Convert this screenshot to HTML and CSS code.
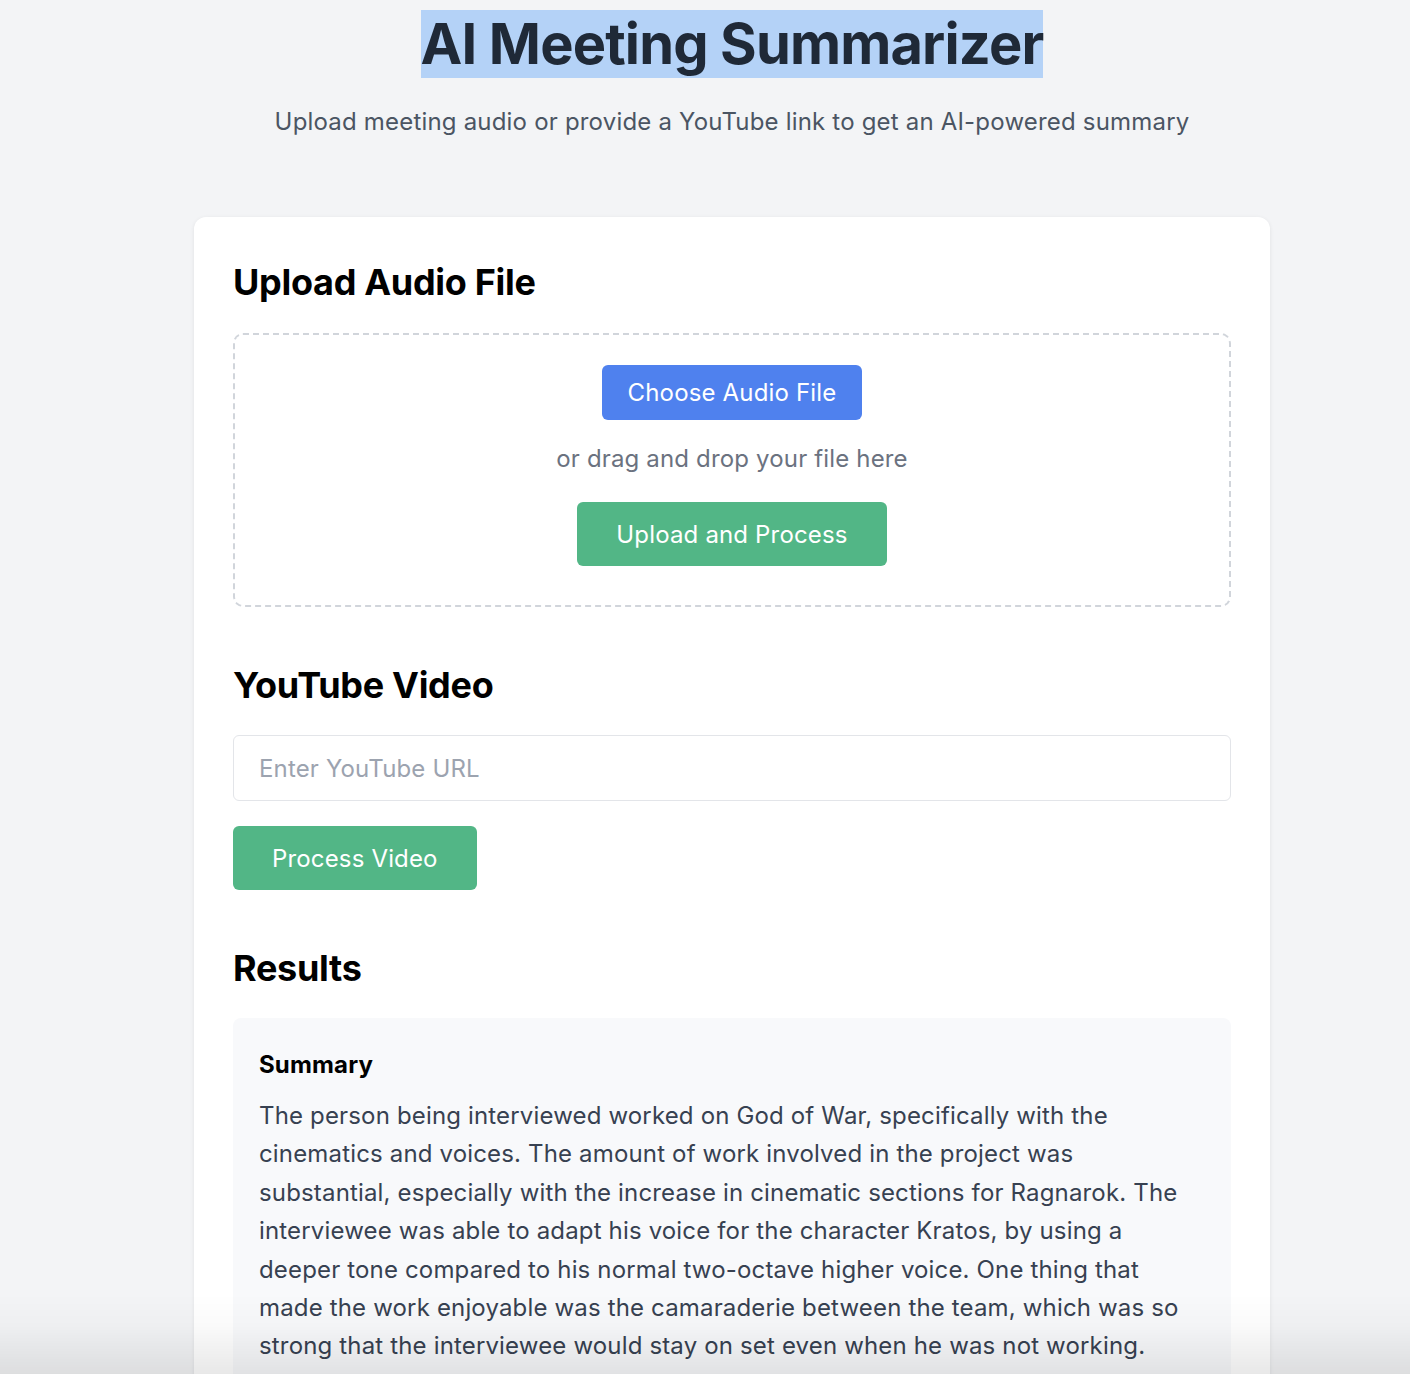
FILE: index.html
```html
<!DOCTYPE html>
<html lang="en">
<head>
<meta charset="utf-8">
<title>AI Meeting Summarizer</title>
<link rel="stylesheet" href="styles.css">
</head>
<body>
<div class="page">
  <header class="hero">
    <h1 class="title"><span class="selected">AI Meeting Summarizer</span></h1>
    <p class="subtitle">Upload meeting audio or provide a YouTube link to get an AI-powered summary</p>
  </header>

  <main class="card">
    <section class="section">
      <h2 class="section-title">Upload Audio File</h2>
      <div class="dropzone">
        <button class="btn btn-blue" type="button">Choose Audio File</button>
        <p class="drop-hint">or drag and drop your file here</p>
        <button class="btn btn-green btn-lg" type="button">Upload and Process</button>
      </div>
    </section>

    <section class="section section-yt">
      <h2 class="section-title">YouTube Video</h2>
      <input class="url-input" type="text" placeholder="Enter YouTube URL">
      <div class="yt-actions">
        <button class="btn btn-green btn-lg" type="button">Process Video</button>
      </div>
    </section>

    <section class="section section-results">
      <h2 class="section-title">Results</h2>
      <div class="result-box">
        <h3 class="result-title">Summary</h3>
        <p class="result-text">The person being interviewed worked on God of War, specifically with the cinematics and voices. The amount of work involved in the project was substantial, especially with the increase in cinematic sections for Ragnarok. The interviewee was able to adapt his voice for the character Kratos, by using a deeper tone compared to his normal two-octave higher voice. One thing that made the work enjoyable was the camaraderie between the team, which was so strong that the interviewee would stay on set even when he was not working.</p>
      </div>
    </section>
  </main>
</div>
<div class="bottom-fade"></div>
</body>
</html>
```

FILE: styles.css
```css
* { box-sizing: border-box; }

html, body {
  margin: 0;
  padding: 0;
  background: #f3f4f6;
}

body {
  font-family: Inter, "Noto Sans", "Liberation Sans", sans-serif;
  color: #1f2937;
  letter-spacing: 0.16px;
  height: 1374px;
  overflow: hidden;
}

.page {
  padding-left: 54px;
  display: flex;
  flex-direction: column;
  align-items: center;
}

.hero {
  text-align: center;
  padding-top: 10px;
}

.title {
  margin: 0;
  font-size: 56px;
  font-weight: 700;
  line-height: normal;
  color: #1f2937;
  letter-spacing: -0.85px;
}

.selected {
  background: #b4d2f7;
}

.subtitle {
  margin: 26px 0 0;
  font-size: 24px;
  line-height: 36px;
  color: #4b5563;
  letter-spacing: 0.19px;
}

.card {
  margin-top: 77px;
  width: 1076px;
  background: #ffffff;
  border-radius: 12px;
  box-shadow: 0 1px 4px rgba(0, 0, 0, 0.08);
  padding: 44px 39px 40px;
}

.section-title {
  margin: 0 0 29px;
  font-size: 36px;
  line-height: 43px;
  font-weight: 700;
  color: #000000;
  letter-spacing: -0.3px;
}

.dropzone {
  border: 2px dashed #d1d5db;
  border-radius: 10px;
  padding: 30px 20px 39px;
  display: flex;
  flex-direction: column;
  align-items: center;
}

.btn {
  border: none;
  border-radius: 6px;
  color: #ffffff;
  font-family: inherit;
  font-size: 24px;
  letter-spacing: 0.16px;
  cursor: pointer;
}

.btn-blue {
  background: #4f81ee;
  height: 55px;
  padding: 0 26px;
}

.btn-green {
  background: #52b686;
}

.btn-lg {
  height: 64px;
  padding: 0 39px;
}

.drop-hint {
  margin: 24px 0 28px;
  font-size: 24px;
  line-height: 30px;
  color: #6b7280;
}

.section-yt {
  margin-top: 57px;
}

.section-yt .section-title {
  margin-bottom: 28px;
}

.url-input {
  display: block;
  width: 100%;
  height: 66px;
  border: 1px solid #e3e5e9;
  border-radius: 6px;
  padding: 0 25px;
  font-family: inherit;
  font-size: 24px;
  letter-spacing: 0.16px;
  color: #1f2937;
  background: #ffffff;
  outline: none;
}

.url-input::placeholder {
  color: #9ca3af;
}

.yt-actions {
  margin-top: 25px;
}

.section-results {
  margin-top: 57px;
}

.section-results .section-title {
  margin-bottom: 28px;
}

.result-box {
  background: #f8f9fb;
  border-radius: 8px;
  padding: 32px 26px 30px;
}

.result-title {
  margin: 0 0 18px;
  font-size: 24px;
  line-height: 29px;
  font-weight: 700;
  color: #000000;
}

.result-text {
  margin: 0;
  font-size: 24px;
  line-height: 38.4px;
  color: #374151;
}

.bottom-fade {
  position: fixed;
  left: 0;
  right: 0;
  bottom: 0;
  height: 80px;
  pointer-events: none;
  background: linear-gradient(to bottom, rgba(0, 0, 0, 0) 0%, rgba(0, 0, 0, 0.02) 40%, rgba(0, 0, 0, 0.09) 100%);
}
```
